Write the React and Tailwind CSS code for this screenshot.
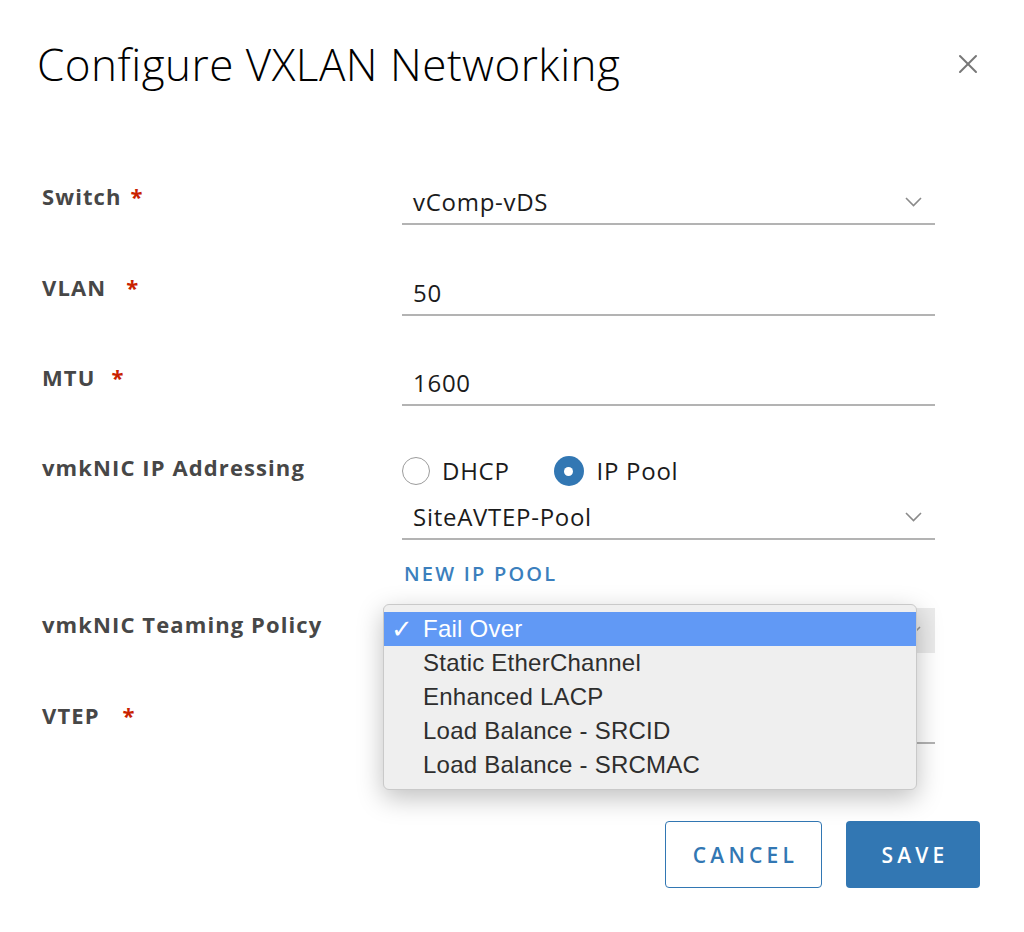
import React from "react";
import { X } from "lucide-react";

const font = { fontFamily: "'Open Sans', 'Liberation Sans', sans-serif" };

function Chevron({ color = "#8a8a8a" }) {
  return (
    <svg width="17" height="10" viewBox="0 0 17 10" fill="none" className="ml-auto">
      <polyline points="1,1 8.5,8.5 16,1" stroke={color} strokeWidth="1.6" />
    </svg>
  );
}

function Label({ text, required, starGap = "ml-3" }) {
  return (
    <div className="pl-[42px] pt-[2px] text-[22px] leading-[28px] font-bold tracking-[0.05em] text-[#474747]">
      {text}
      {required && <span className={`${starGap} text-[#c92100]`}>*</span>}
    </div>
  );
}

function Field({ value, select, className = "" }) {
  return (
    <div className={`flex items-center h-[45px] border-b-2 border-[#b3b3b3] pl-[11px] pr-[13px] ${className}`}>
      <span className="text-[24px] tracking-[0.03em] text-[#1b1b1b]">{value}</span>
      {select && <Chevron />}
    </div>
  );
}

function Row({ children, className = "" }) {
  return <div className={`grid grid-cols-[402px_533px] ${className}`}>{children}</div>;
}

export default function App() {
  const options = [
    "Fail Over",
    "Static EtherChannel",
    "Enhanced LACP",
    "Load Balance - SRCID",
    "Load Balance - SRCMAC",
  ];

  return (
    <div className="relative w-[1024px] h-[932px] bg-white overflow-hidden" style={font}>
      {/* header */}
      <div className="flex items-center justify-between pl-[37px] pr-[40px] pt-[36px]">
        <h1 className="text-[44px] font-light leading-[56px] tracking-[0.5px] text-black">
          Configure VXLAN Networking
        </h1>
        <X className="text-[#777]" size={32} strokeWidth={1.5} />
      </div>

      {/* form */}
      <div className="mt-[88px] flex flex-col">
        <Row>
          <Label text="Switch" required starGap="ml-[9px]" />
          <Field value="vComp-vDS" select />
        </Row>

        <Row className="mt-[46px]">
          <Label text="VLAN" required starGap="ml-[20px]" />
          <Field value="50" />
        </Row>

        <Row className="mt-[45px]">
          <Label text="MTU" required starGap="ml-4" />
          <Field value="1600" />
        </Row>

        <Row className="mt-[45px]">
          <Label text="vmkNIC IP Addressing" />
          <div className="flex flex-col">
            <div className="flex items-center h-[40px] text-[24px] tracking-[0.03em] text-[#1b1b1b]">
              <span className="w-[28px] h-[28px] rounded-full border-[1.5px] border-[#9c9c9c] bg-white" />
              <span className="ml-[12px]">DHCP</span>
              <span className="ml-[44px] w-[30px] h-[30px] rounded-full bg-[#3277b3] flex items-center justify-center">
                <span className="w-[9px] h-[9px] rounded-full bg-white" />
              </span>
              <span className="ml-[13px]">IP Pool</span>
            </div>
            <Field value="SiteAVTEP-Pool" select className="mt-[4px]" />
            <div className="pl-[2px] mt-[20px] text-[20px] leading-[28px] font-semibold tracking-[0.11em] text-[#3b7fbd]">
              NEW IP POOL
            </div>
          </div>
        </Row>

        <Row className="mt-[20px]">
          <Label text="vmkNIC Teaming Policy" />
          <div className="-ml-[19px] h-[45px] bg-[#ebebeb] flex items-center pr-[14px]">
            <Chevron color="#9a9a9a" />
          </div>
        </Row>

        <Row className="mt-[46px]">
          <Label text="VTEP" required starGap="ml-[23px]" />
          <Field value="" className="-ml-[19px]" />
        </Row>

        {/* footer buttons */}
        <div className="flex justify-end gap-[24px] pr-[44px] mt-[77px]">
          <button className="w-[157px] h-[67px] rounded-[4px] border-[1.5px] border-[#3277b3] bg-white text-[#3277b3] text-[21px] font-semibold tracking-[0.2em] pl-[4px] pt-[2px]">
            CANCEL
          </button>
          <button className="w-[134px] h-[67px] rounded-[4px] bg-[#3277b3] text-white text-[21px] font-semibold tracking-[0.2em] pl-[4px] pt-[2px]">
            SAVE
          </button>
        </div>
      </div>

      {/* open native select menu */}
      <div
        className="absolute left-[383px] top-[604px] w-[534px] h-[186px] rounded-[6px] bg-[#efefef] border border-[#c9c9c9] shadow-[0_8px_26px_rgba(0,0,0,0.25)] pt-[7px]"
        style={{ fontFamily: "'Liberation Sans', Arial, sans-serif" }}
      >
        {options.map((o, i) => (
          <div
            key={o}
            className={`flex items-center h-[34px] text-[24px] tracking-[0.01em] ${
              i === 0 ? "bg-[#6199f5] text-white" : "text-[#2e2e2e]"
            }`}
          >
            <span className="w-[39px] pl-[7px] text-[26px] leading-[30px] font-bold" style={{ fontFamily: "'DejaVu Sans', sans-serif" }}>
              {i === 0 ? "✓" : ""}
            </span>
            <span>{o}</span>
          </div>
        ))}
      </div>
    </div>
  );
}
